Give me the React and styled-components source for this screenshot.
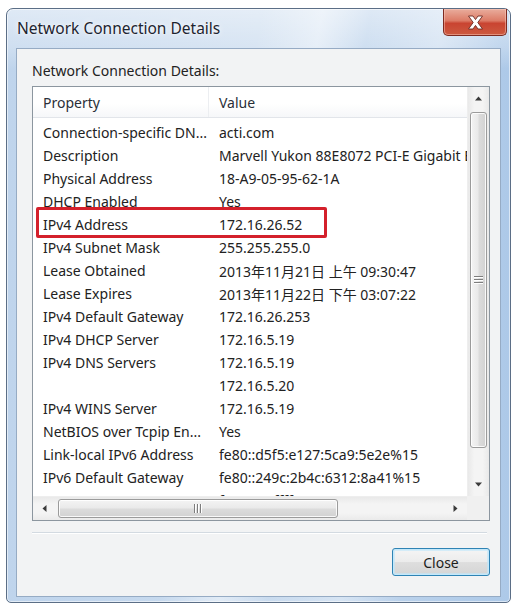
import React from 'react';
import styled, { createGlobalStyle } from 'styled-components';

const GlobalStyle = createGlobalStyle`
  html, body {
    margin: 0;
    padding: 0;
    background: #ffffff;
  }
  body {
    font-family: "Noto Sans", "Noto Sans CJK SC", sans-serif;
    color: #262626;
  }
`;

const Page = styled.div`
  width: 515px;
  height: 607px;
  box-sizing: border-box;
  padding: 8px 0 0 6px;
`;

const Window = styled.div`
  width: 505px;
  height: 595px;
  box-sizing: border-box;
  display: flex;
  flex-direction: column;
  border: 1px solid #5b6e86;
  border-radius: 7px 7px 5px 5px;
  box-shadow: inset 0 0 0 1px rgba(255, 255, 255, 0.55);
  background:
    linear-gradient(180deg, rgba(255, 255, 255, 0.5) 0px, rgba(255, 255, 255, 0.25) 38px, rgba(255, 255, 255, 0) 60px),
    linear-gradient(100deg, rgba(255, 255, 255, 0) 42%, rgba(255, 255, 255, 0.45) 52%, rgba(255, 255, 255, 0) 60%, rgba(255, 255, 255, 0.35) 72%, rgba(255, 255, 255, 0) 82%),
    linear-gradient(90deg, #bfd4ec 0%, #cbdcef 50%, #adc9e8 100%);
`;

const TitleBar = styled.div`
  height: 39px;
  flex: none;
  display: flex;
  align-items: flex-start;
  justify-content: space-between;
  padding: 0 3px 0 10px;
`;

const Title = styled.div`
  margin-top: 9px;
  font-size: 15.5px;
  line-height: 20px;
  color: #1c2430;
  text-shadow: 0 0 6px rgba(255, 255, 255, 0.95), 0 0 2px rgba(255, 255, 255, 0.9);
  white-space: nowrap;
`;

const CloseCaption = styled.div`
  width: 64px;
  height: 27px;
  box-sizing: border-box;
  display: flex;
  align-items: center;
  justify-content: center;
  border: 1px solid #7d2a20;
  border-top: none;
  border-radius: 0 0 5px 5px;
  background: linear-gradient(180deg, #e9ad9d 0%, #dc7b66 45%, #c94431 55%, #cc5a40 100%);
  box-shadow: inset 0 0 0 1px rgba(255, 210, 200, 0.45);
`;

const Client = styled.div`
  flex: 1;
  margin: 0 9px 5px 9px;
  border: 1px solid #96abc4;
  background: #f2f3f4;
  display: flex;
  flex-direction: column;
  padding: 13px 10px 0 15px;
`;

const GroupLabel = styled.div`
  font-size: 14px;
  line-height: 18px;
  color: #222;
  white-space: nowrap;
`;

const ListView = styled.div`
  position: relative;
  margin-top: 6px;
  width: 458px;
  height: 435px;
  box-sizing: border-box;
  border: 1px solid #8c969f;
  background: #ffffff;
  display: grid;
  grid-template-columns: 1fr 22px;
  grid-template-rows: 1fr 24px;
`;

const Viewport = styled.div`
  overflow: hidden;
  min-width: 0;
  min-height: 0;
`;

const HeaderRow = styled.div`
  height: 30px;
  display: grid;
  grid-template-columns: 176px 1fr;
  border-bottom: 1px solid #e2e5ea;
  background: linear-gradient(180deg, #ffffff 0%, #ffffff 55%, #f6f7f9 100%);
`;

const HeaderCell = styled.div`
  display: flex;
  align-items: center;
  padding-left: 10px;
  font-size: 14px;
  color: #2a2f38;
  border-right: ${p => (p.$divider ? '1px solid #eceef1' : 'none')};
`;

const Body = styled.div`
  padding-top: 3px;
`;

const Row = styled.div`
  height: 23px;
  display: grid;
  grid-template-columns: 176px max-content;
  align-items: center;
  font-size: 14px;
  white-space: nowrap;
`;

const Cell = styled.div`
  padding-left: 10px;
  color: #222222;
`;

const VScroll = styled.div`
  grid-column: 2;
  grid-row: 1;
  display: flex;
  flex-direction: column;
  background: linear-gradient(90deg, #e9e9e9 0%, #f4f4f4 30%, #f4f4f4 70%, #e9e9e9 100%);
  border-left: 1px solid #eeeeee;
`;

const HScroll = styled.div`
  grid-column: 1;
  grid-row: 2;
  display: flex;
  align-items: stretch;
  background: linear-gradient(180deg, #e9e9e9 0%, #f4f4f4 30%, #f4f4f4 70%, #eaeaea 100%);
  border-top: 1px solid #eeeeee;
`;

const Corner = styled.div`
  grid-column: 2;
  grid-row: 2;
  background: #f0f0f0;
`;

const ArrowBox = styled.div`
  flex: none;
  width: ${p => (p.$horizontal ? '23px' : 'auto')};
  height: ${p => (p.$horizontal ? 'auto' : '23px')};
  display: flex;
  align-items: center;
  justify-content: center;
`;

const Track = styled.div`
  flex: 1;
  display: flex;
  flex-direction: ${p => (p.$horizontal ? 'row' : 'column')};
  padding: ${p => (p.$horizontal ? '2px 0 2px 2px' : '2px 2px 0 2px')};
`;

const Thumb = styled.div`
  box-sizing: border-box;
  width: ${p => (p.$horizontal ? `${p.$length}px` : 'auto')};
  height: ${p => (p.$horizontal ? 'auto' : `${p.$length}px`)};
  flex: none;
  display: flex;
  align-items: center;
  justify-content: center;
  border: 1px solid #9b9b9b;
  border-radius: 3px;
  box-shadow: inset 0 0 0 1px rgba(255, 255, 255, 0.85);
  background: ${p =>
    p.$horizontal
      ? 'linear-gradient(180deg, #f4f4f4 0%, #e9e9e9 48%, #dcdcdc 52%, #d2d2d2 100%)'
      : 'linear-gradient(90deg, #f4f4f4 0%, #e9e9e9 48%, #dcdcdc 52%, #d2d2d2 100%)'};
`;

const Highlight = styled.div`
  position: absolute;
  left: 3px;
  top: 120px;
  width: 291px;
  height: 31px;
  box-sizing: border-box;
  border: 3px solid #d4202b;
  border-radius: 2px;
  pointer-events: none;
`;

const Separator = styled.div`
  margin-top: 11px;
  width: 455px;
  border-top: 1px solid #d3dae1;
  border-bottom: 1px solid #ffffff;
`;

const Footer = styled.div`
  margin-top: 14px;
  display: flex;
  justify-content: flex-end;
`;

const PushButton = styled.button`
  width: 98px;
  height: 28px;
  box-sizing: border-box;
  border: 1px solid #2f83b4;
  border-radius: 3px;
  box-shadow: inset 0 0 0 1px #c4e8fa, inset 0 0 0 2px rgba(190, 230, 250, 0.6);
  background: linear-gradient(180deg, #f5f5f5 0%, #ececec 48%, #dedede 52%, #d5d5d5 100%);
  font-family: "Noto Sans", sans-serif;
  font-size: 14px;
  color: #1d1d1d;
  padding: 0;
`;

const Arrow = ({ dir }) => {
  const pts = {
    up: '0,4.5 3.5,0.5 7,4.5',
    down: '0,0.5 3.5,4.5 7,0.5',
    left: '4.5,0 0.5,3.5 4.5,7',
    right: '0.5,0 4.5,3.5 0.5,7',
  }[dir];
  const wide = dir === 'up' || dir === 'down';
  return (
    <svg width={wide ? 7 : 5} height={wide ? 5 : 7} viewBox={wide ? '0 0 7 5' : '0 0 5 7'}>
      <polygon points={pts} fill="#3a3a3a" />
    </svg>
  );
};

const Grip = ({ horizontal }) =>
  horizontal ? (
    <svg width="8" height="9" viewBox="0 0 8 9">
      {[0, 3, 6].map(x => (
        <g key={x}>
          <rect x={x} y="0" width="1" height="9" fill="#7d7d7d" />
          <rect x={x + 1} y="0" width="1" height="9" fill="#ffffff" />
        </g>
      ))}
    </svg>
  ) : (
    <svg width="9" height="8" viewBox="0 0 9 8">
      {[0, 3, 6].map(y => (
        <g key={y}>
          <rect x="0" y={y} width="9" height="1" fill="#7d7d7d" />
          <rect x="0" y={y + 1} width="9" height="1" fill="#ffffff" />
        </g>
      ))}
    </svg>
  );

const CloseGlyph = () => (
  <svg width="17" height="15" viewBox="0 0 17 15">
    <path
      d="M1.5 1 H6 L8.5 4.6 L11 1 H15.5 L10.8 7.5 L15.5 14 H11 L8.5 10.4 L6 14 H1.5 L6.2 7.5 Z"
      fill="#ffffff"
      stroke="#6b2a22"
      strokeWidth="0.9"
      strokeLinejoin="round"
    />
  </svg>
);

const details = [
  ['Connection-specific DN...', 'acti.com'],
  ['Description', 'Marvell Yukon 88E8072 PCI-E Gigabit Ethernet Controller'],
  ['Physical Address', '18-A9-05-95-62-1A'],
  ['DHCP Enabled', 'Yes'],
  ['IPv4 Address', '172.16.26.52'],
  ['IPv4 Subnet Mask', '255.255.255.0'],
  ['Lease Obtained', '2013年11月21日 上午 09:30:47'],
  ['Lease Expires', '2013年11月22日 下午 03:07:22'],
  ['IPv4 Default Gateway', '172.16.26.253'],
  ['IPv4 DHCP Server', '172.16.5.19'],
  ['IPv4 DNS Servers', '172.16.5.19'],
  ['', '172.16.5.20'],
  ['IPv4 WINS Server', '172.16.5.19'],
  ['NetBIOS over Tcpip En...', 'Yes'],
  ['Link-local IPv6 Address', 'fe80::d5f5:e127:5ca9:5e2e%15'],
  ['IPv6 Default Gateway', 'fe80::249c:2b4c:6312:8a41%15'],
  ['IPv6 DNS Server', 'fec0:0:0:ffff::1%1'],
];

export default function App() {
  return (
    <Page>
      <GlobalStyle />
      <Window>
        <TitleBar>
          <Title>Network Connection Details</Title>
          <CloseCaption>
            <CloseGlyph />
          </CloseCaption>
        </TitleBar>
        <Client>
          <GroupLabel>Network Connection Details:</GroupLabel>
          <ListView>
            <Viewport>
              <HeaderRow>
                <HeaderCell $divider>Property</HeaderCell>
                <HeaderCell>Value</HeaderCell>
              </HeaderRow>
              <Body>
                {details.map(([prop, value], i) => (
                  <Row key={i}>
                    <Cell>{prop}</Cell>
                    <Cell>{value}</Cell>
                  </Row>
                ))}
              </Body>
            </Viewport>
            <VScroll>
              <ArrowBox>
                <Arrow dir="up" />
              </ArrowBox>
              <Track>
                <Thumb $length={336}>
                  <Grip />
                </Thumb>
              </Track>
              <ArrowBox>
                <Arrow dir="down" />
              </ArrowBox>
            </VScroll>
            <HScroll>
              <ArrowBox $horizontal>
                <Arrow dir="left" />
              </ArrowBox>
              <Track $horizontal>
                <Thumb $horizontal $length={280}>
                  <Grip horizontal />
                </Thumb>
              </Track>
              <ArrowBox $horizontal>
                <Arrow dir="right" />
              </ArrowBox>
            </HScroll>
            <Corner />
            <Highlight />
          </ListView>
          <Separator />
          <Footer>
            <PushButton>Close</PushButton>
          </Footer>
        </Client>
      </Window>
    </Page>
  );
}
